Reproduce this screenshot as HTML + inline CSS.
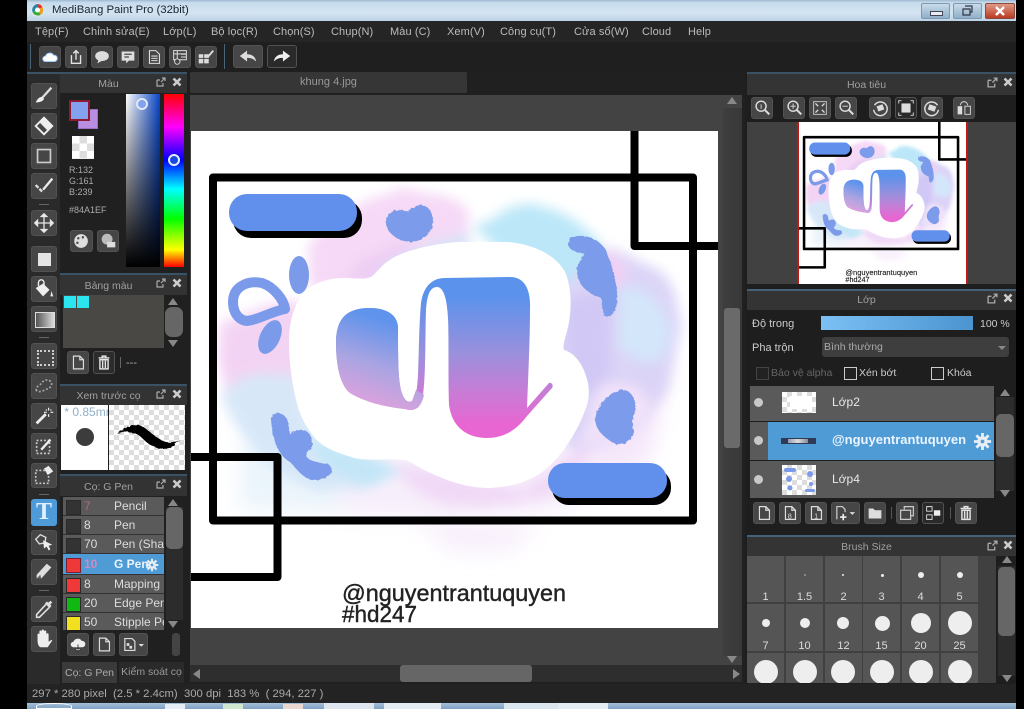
<!DOCTYPE html>
<html><head><meta charset="utf-8"><title>MediBang Paint Pro</title>
<style>
html,body{margin:0;padding:0;background:#000}
#p{position:relative;width:1024px;height:709px;overflow:hidden;background:#000;font-family:"Liberation Sans","DejaVu Sans",sans-serif;font-size:12px;color:#bbb}
#p div,#p svg,#p span.t{position:absolute}
.t{white-space:nowrap;line-height:14px}
.mn{font-size:11px;letter-spacing:.1px}
.b{background:#464646;border:1px solid #525252;border-radius:3px;box-sizing:border-box}
.b svg{left:0;top:0;width:100%;height:100%}
.h{background:#333;color:#a0a0a0;text-align:center;line-height:19px;font-size:10.5px;border-top:2px solid #3a5266;box-sizing:border-box}
.hr{padding-right:30px}
.sb{background:#2c2c2c}
.th{background:#666;border-radius:5px}
.rw{background:#5a5a5a;border-bottom:1px solid #333;box-sizing:border-box;left:63px;width:101px;height:19px;color:#ddd}
.sw{left:3px;top:3px;width:13px;height:13px;background:#333;border:1px solid #2a2a2a}
.n{left:21px;top:2px;font-size:12px;line-height:15px}
.m{left:51px;top:2px;font-size:12px;line-height:15px;white-space:nowrap;width:50px;overflow:hidden}
.c{background:#555;width:37px;box-sizing:border-box}
.d{background:#eee;border-radius:50%}
.l{color:#ddd;font-size:11px;text-align:center;line-height:12px;width:37px}
.ck{width:11px;height:11px;border:1px solid #ccc;background:#222}
.up{width:0;height:0;border-left:5px solid transparent;border-right:5px solid transparent;border-bottom:7px solid #888}
.dn{width:0;height:0;border-left:5px solid transparent;border-right:5px solid transparent;border-top:7px solid #888}
.chk{background-color:#fff;background-image:linear-gradient(45deg,#ddd 25%,transparent 25%,transparent 75%,#ddd 75%),linear-gradient(45deg,#ddd 25%,transparent 25%,transparent 75%,#ddd 75%);background-size:10px 10px;background-position:0 0,5px 5px}
</style></head><body><div id="p">

<svg width="0" height="0" style="left:0;top:0"><defs>
<symbol id="pop" viewBox="0 0 10 10"><path d="M1 3h3M1 3v6h6V6M5 5l4-4M6 1h3v3" fill="none" stroke="#aaa" stroke-width="1.2"/></symbol>
<symbol id="xx" viewBox="0 0 10 10"><path d="M1.5 1.5l7 7M8.5 1.5l-7 7" fill="none" stroke="#ccc" stroke-width="2.6"/></symbol>
<symbol id="page" viewBox="0 0 22 22"><path d="M6 4h7l4 4v10H6zM13 4v4h4" fill="none" stroke="#ddd" stroke-width="1.3"/></symbol>
<symbol id="trash" viewBox="0 0 22 22"><path d="M5 6h12M9 6V4h4v2M6.5 8h9v10h-9zM9.5 9v8M12.5 9v8" fill="none" stroke="#e4e4e4" stroke-width="1.6"/></symbol>
<symbol id="gear" viewBox="0 0 20 20"><circle cx="10" cy="10" r="5.5" fill="#e8eef5"/><path d="M10 1v18M1 10h18M3.6 3.6l12.8 12.8M16.4 3.6L3.6 16.4" stroke="#e8eef5" stroke-width="3"/><circle cx="10" cy="10" r="2" fill="#5a9ad0"/></symbol>
<filter id="wc" x="-25%" y="-25%" width="150%" height="150%"><feTurbulence type="fractalNoise" baseFrequency=".06" numOctaves="3" seed="4"/><feDisplacementMap in="SourceGraphic" scale="6"/><feGaussianBlur stdDeviation="6"/></filter>
<filter id="wc2" x="-30%" y="-30%" width="160%" height="160%"><feGaussianBlur stdDeviation="11"/></filter>
<filter id="rg" x="-10%" y="-10%" width="120%" height="120%"><feTurbulence type="fractalNoise" baseFrequency=".3" numOctaves="2" seed="2"/><feDisplacementMap in="SourceGraphic" scale="3"/></filter>
<linearGradient id="lg" gradientUnits="userSpaceOnUse" x1="0" y1="295" x2="0" y2="425"><stop offset="0" stop-color="#5a92ec"/><stop offset=".45" stop-color="#9a90dc"/><stop offset=".75" stop-color="#c87cd6"/><stop offset="1" stop-color="#e866d2"/></linearGradient>
<linearGradient id="lg2" gradientUnits="userSpaceOnUse" x1="378" y1="318" x2="350" y2="405"><stop offset="0" stop-color="#5f93ec"/><stop offset=".5" stop-color="#aaa4e2"/><stop offset="1" stop-color="#e4a2dc"/></linearGradient>
</defs></svg>

<!-- title bar -->
<div style="left:27px;top:0;width:989px;height:21px;background:linear-gradient(#9db8d0 0,#c6dbec 12%,#d5e4f1 60%,#bcd2e6 100%)"></div>
<svg style="left:30px;top:2px" width="15" height="16" viewBox="0 0 15 16"><circle cx="7.5" cy="8" r="6.5" fill="#e8e8e8"/><path d="M7.5 2a6 6 0 0 1 5 3L7.5 8z" fill="#d33"/><path d="M12.5 5a6 6 0 0 1-2 8L7.5 8z" fill="#e8a020"/><path d="M10.5 13a6 6 0 0 1-8-3L7.5 8z" fill="#3a3"/><path d="M2.5 10a6 6 0 0 1 5-8V8z" fill="#28a"/><circle cx="7.5" cy="8" r="2.5" fill="#fff"/></svg>
<span class="t" style="left:52px;top:3px;color:#1a2530;font-size:11.4px">MediBang Paint Pro (32bit)</span>
<div style="left:921px;top:3px;width:29px;height:16px;background:linear-gradient(#c8dbe9,#8fb0c9);border:1px solid #7e99b0;box-sizing:border-box;border-radius:2px"></div>
<div style="left:930px;top:11px;width:11px;height:3px;background:#e6edf3;border:1px solid #445"></div>
<div style="left:953px;top:3px;width:29px;height:16px;background:linear-gradient(#c8dbe9,#8fb0c9);border:1px solid #7e99b0;box-sizing:border-box;border-radius:2px"></div>
<svg style="left:961px;top:5px" width="13" height="12" viewBox="0 0 13 12"><path d="M4 1h7v6H9M2 4h7v6H2z" fill="none" stroke="#334" stroke-width="1.2"/></svg>
<div style="left:985px;top:3px;width:30px;height:16px;background:linear-gradient(#e09a88,#bb3a22);border:1px solid #8a4a3c;box-sizing:border-box;border-radius:2px"></div>
<svg style="left:994px;top:6px" width="12" height="10" viewBox="0 0 12 10"><path d="M2 1l8 8M10 1L2 9" stroke="#fff" stroke-width="2.4"/></svg>

<!-- menu -->
<div style="left:27px;top:21px;width:989px;height:21px;background:#252525"></div>
<span class="t mn" style="left:35px;top:25px">Tệp(F)</span>
<span class="t mn" style="left:83px;top:25px">Chỉnh sửa(E)</span>
<span class="t mn" style="left:163px;top:25px">Lớp(L)</span>
<span class="t mn" style="left:211px;top:25px">Bộ lọc(R)</span>
<span class="t mn" style="left:273px;top:25px">Chọn(S)</span>
<span class="t mn" style="left:331px;top:25px">Chụp(N)</span>
<span class="t mn" style="left:390px;top:25px">Màu (C)</span>
<span class="t mn" style="left:447px;top:25px">Xem(V)</span>
<span class="t mn" style="left:500px;top:25px">Công cụ(T)</span>
<span class="t mn" style="left:574px;top:25px">Cửa sổ(W)</span>
<span class="t mn" style="left:642px;top:25px">Cloud</span>
<span class="t mn" style="left:688px;top:25px">Help</span>

<!-- toolbar -->
<div style="left:27px;top:42px;width:989px;height:30px;background:#1f1f1f"></div>
<div style="left:30px;top:44px;width:1px;height:25px;background:#4a6478"></div>
<div style="left:224px;top:44px;width:1px;height:25px;background:#4a6478"></div>
<div class="b" style="left:39px;top:46px;width:22px;height:22px"><svg viewBox="0 0 22 22"><path d="M6 16a3 3 0 0 1 0-6 5 5 0 0 1 9-1 3.5 3.5 0 0 1 1 7z" fill="#fff" stroke="#8fc4ff" stroke-width="1"/></svg></div>
<div class="b" style="left:65px;top:46px;width:22px;height:22px"><svg viewBox="0 0 22 22"><path d="M6 9v9h10V9M11 14V4M8 7l3-3 3 3" fill="none" stroke="#e4e4e4" stroke-width="1.5"/></svg></div>
<div class="b" style="left:91px;top:46px;width:22px;height:22px"><svg viewBox="0 0 22 22"><ellipse cx="11" cy="10" rx="7.5" ry="5.5" fill="#ddd"/><path d="M7 14l-1 4 5-3z" fill="#ddd"/></svg></div>
<div class="b" style="left:117px;top:46px;width:22px;height:22px"><svg viewBox="0 0 22 22"><path d="M4 5h14v10h-6l-3 3v-3H4z" fill="#ddd"/><path d="M7 8h8M7 11h5" stroke="#444" stroke-width="1.3"/></svg></div>
<div class="b" style="left:143px;top:46px;width:22px;height:22px"><svg viewBox="0 0 22 22"><path d="M6 4h7l4 4v10H6zM8 10h7M8 12.500h7M8 15h7" fill="none" stroke="#ddd" stroke-width="1.2"/></svg></div>
<div class="b" style="left:169px;top:46px;width:22px;height:22px"><svg viewBox="0 0 22 22"><path d="M4 4h14v10H4zM4 7.500h14M8 4v10M12 8h6M12 11h6" fill="none" stroke="#ddd" stroke-width="1.1"/><circle cx="8" cy="16" r="3" fill="#444" stroke="#ddd"/></svg></div>
<div class="b" style="left:195px;top:46px;width:22px;height:22px"><svg viewBox="0 0 22 22"><path d="M3 8h5v4H3zM9 8h5v4H9zM3 13h5v5H3zM9 13h5v5H9z" fill="#ddd"/><path d="M13 11l6-7" stroke="#ddd" stroke-width="2"/></svg></div>
<div class="b" style="left:233px;top:45px;width:30px;height:23px"><svg viewBox="0 0 30 23"><path d="M6 11l8-6v4c6 0 9 3 10 8-3-3-6-4-10-4v4z" fill="#ddd"/></svg></div>
<div class="b" style="left:267px;top:45px;width:30px;height:23px;background:#2a2a2a"><svg viewBox="0 0 30 23"><path d="M24 11l-8-6v4c-6 0-9 3-10 8 3-3 6-4 10-4v4z" fill="#eee"/></svg></div>

<!-- left tool col -->
<div style="left:27px;top:72px;width:33px;height:612px;background:#2a2a2a;border-top:2px solid #3a5266;box-sizing:border-box"></div>
<div class="b" style="left:31px;top:83px;width:26px;height:26px"><svg viewBox="0 0 26 26"><path d="M21 4L11 15" stroke="#ddd" stroke-width="2.500"/><path d="M11 14c-3 0-5 2-7 6 4 0 8-1 9-4z" fill="#eee"/></svg></div>
<div class="b" style="left:31px;top:113px;width:26px;height:26px"><svg viewBox="0 0 26 26"><path d="M13 4l9 9-9 9-9-9z" fill="none" stroke="#eee" stroke-width="2"/><path d="M8 9l5-5 9 9-5 5z" fill="#eee"/></svg></div>
<div class="b" style="left:31px;top:143px;width:26px;height:26px"><svg viewBox="0 0 26 26"><rect x="6" y="6" width="14" height="14" fill="none" stroke="#ccc" stroke-width="1.800"/></svg></div>
<div class="b" style="left:31px;top:173px;width:26px;height:26px"><svg viewBox="0 0 26 26"><path d="M22 5L12 17" stroke="#eee" stroke-width="2.500"/><path d="M4 12l3 3M8 16l3 3" stroke="#ddd" stroke-width="2.500"/></svg></div>
<div style="left:39px;top:204px;width:10px;height:1px;background:#666"></div>
<div class="b" style="left:31px;top:210px;width:26px;height:26px"><svg viewBox="0 0 26 26"><path d="M13 4v18M4 13h18M13 3l-3 3h6zM13 23l-3-3h6zM3 13l3-3v6zM23 13l-3-3v6z" fill="#e8e8e8" stroke="#e8e8e8" stroke-width="1.400"/></svg></div>
<div class="b" style="left:31px;top:246px;width:26px;height:26px"><div style="left:6px;top:6px;width:13px;height:13px;background:#e4e4e4"></div></div>
<div class="b" style="left:31px;top:276px;width:26px;height:26px"><svg viewBox="0 0 26 26"><path d="M4 12l8-5 7 7-7 7z" fill="#eee"/><path d="M7 10V6a3 3 0 0 1 6 0v4" fill="none" stroke="#eee" stroke-width="1.500"/><path d="M21 15l2 6h-3z" fill="#eee"/></svg></div>
<div class="b" style="left:31px;top:306px;width:26px;height:26px"><div style="left:3px;top:5px;width:18px;height:14px;background:linear-gradient(90deg,#555,#ddd);border:1px solid #ddd"></div></div>
<div style="left:39px;top:337px;width:10px;height:1px;background:#666"></div>
<div class="b" style="left:31px;top:343px;width:26px;height:26px"><div style="left:5px;top:6px;width:13px;height:12px;border:2px dotted #ccc"></div></div>
<div class="b" style="left:31px;top:373px;width:26px;height:26px"><svg viewBox="0 0 26 26"><path d="M5 18c-2-4 3-5 5-8s7-5 10-2 0 7-3 8-9 5-12 2z" fill="none" stroke="#aaa" stroke-width="1.800" stroke-dasharray="2 2"/></svg></div>
<div class="b" style="left:31px;top:403px;width:26px;height:26px"><svg viewBox="0 0 26 26"><path d="M5 21L15 11" stroke="#eee" stroke-width="3"/><path d="M18 4v3M18 11v3M13 9h3M20 9h3M15 6l1 1M21 6l-1 1" stroke="#eee" stroke-width="1.300"/></svg></div>
<div class="b" style="left:31px;top:433px;width:26px;height:26px"><svg viewBox="0 0 26 26"><rect x="5" y="7" width="14" height="14" fill="none" stroke="#ccc" stroke-width="1.800" stroke-dasharray="2 2"/><path d="M10 17l10-11" stroke="#eee" stroke-width="2.500"/></svg></div>
<div class="b" style="left:31px;top:463px;width:26px;height:25px"><svg viewBox="0 0 26 25"><rect x="4" y="7" width="14" height="14" fill="none" stroke="#ccc" stroke-width="1.800" stroke-dasharray="2 2"/><path d="M13 5l5-3 5 6-6 4z" fill="#eee"/></svg></div>
<div style="left:39px;top:494px;width:10px;height:1px;background:#666"></div>
<div style="left:31px;top:499px;width:26px;height:27px;background:#4f9bd8;border-radius:3px;color:#dff0ff;font:bold 24px/27px 'Liberation Serif',serif;text-align:center">T</div>
<div class="b" style="left:31px;top:530px;width:26px;height:25px"><svg viewBox="0 0 26 25"><path d="M4 9l5-5 6 3-1 6-6 1z" fill="none" stroke="#ddd" stroke-width="1.500"/><path d="M12 10l10 5-4 1 2 4-2 1-2-4-3 2z" fill="#eee"/></svg></div>
<div class="b" style="left:31px;top:559px;width:26px;height:26px"><svg viewBox="0 0 26 26"><path d="M16 4l5 4-11 12H5v-4z" fill="#ddd"/><path d="M5 20l5 0-1-4z" fill="#666"/></svg></div>
<div style="left:39px;top:590px;width:10px;height:1px;background:#666"></div>
<div class="b" style="left:31px;top:596px;width:26px;height:26px"><svg viewBox="0 0 26 26"><path d="M15 8L5 19v3h3L19 11" fill="none" stroke="#ddd" stroke-width="1.800"/><path d="M14 7l2-2 2 1 2-2 2 2-2 2 1 2-2 2z" fill="#ddd"/></svg></div>
<div class="b" style="left:31px;top:626px;width:26px;height:26px"><svg viewBox="0 0 26 26"><path d="M6 13V8a1 1 0 0 1 2 0V5a1 1 0 0 1 2.500 0V4a1 1 0 0 1 2.500 0v1a1 1 0 0 1 2.500 0v3a1 1 0 0 1 2.500 0v8l3-2c1 0 1 1 0 2l-4 6H9c-3-2-3-6-3-9z" fill="#eee"/></svg></div>

<!-- left panels background -->
<div style="left:60px;top:72px;width:130px;height:612px;background:#202020"></div>
<div class="h" style="left:60px;top:72px;width:127px;height:21px;line-height:21px"><span style="position:relative;left:-15px">Màu</span></div>
<svg style="left:156px;top:77px" width="10" height="10"><use href="#pop"/></svg><svg style="left:172px;top:77px" width="10" height="10"><use href="#xx"/></svg>
<div style="left:78px;top:109px;width:20px;height:20px;background:#b98ee0;border:1px solid #9a70c4;box-sizing:border-box"></div>
<div style="left:69px;top:100px;width:21px;height:21px;background:#84a1ef;border:2px solid #8d1a30;box-sizing:border-box"></div>
<div class="chk" style="left:72px;top:136px;width:22px;height:23px;background-size:15px 15px;background-position:0 0,7.500px 7.500px"></div>
<span class="t" style="left:69px;top:165px;font-size:9px;line-height:11px;color:#aaa">R:132</span>
<span class="t" style="left:69px;top:176px;font-size:9px;line-height:11px;color:#aaa">G:161</span>
<span class="t" style="left:69px;top:187px;font-size:9px;line-height:11px;color:#aaa">B:239</span>
<span class="t" style="left:69px;top:205px;font-size:9px;line-height:11px;color:#aaa">#84A1EF</span>
<div class="b" style="left:70px;top:230px;width:23px;height:22px"><svg viewBox="0 0 23 22"><circle cx="11" cy="11" r="7.500" fill="#ddd"/><circle cx="8" cy="8" r="1.300" fill="#444"/><circle cx="13" cy="7" r="1.300" fill="#444"/><circle cx="7" cy="13" r="1.300" fill="#444"/></svg></div>
<div class="b" style="left:97px;top:230px;width:22px;height:22px"><svg viewBox="0 0 22 22"><circle cx="10" cy="9" r="6" fill="#bbb"/><rect x="10" y="12" width="9" height="6" fill="#ddd"/></svg></div>
<div style="left:126px;top:94px;width:34px;height:173px;background:linear-gradient(#0000 0,#000 100%),linear-gradient(90deg,#fff,#0a46c8)"></div>
<div style="left:136px;top:98px;width:8px;height:8px;border:2px solid #dfe8f5;border-radius:50%;background:#84a1ef"></div>
<div style="left:164px;top:94px;width:20px;height:173px;background:linear-gradient(#f00 0,#f0f 19%,#00f 38%,#0ff 55%,#0f0 72%,#ff0 90%,#f00 100%)"></div>
<div style="left:168px;top:154px;width:8px;height:8px;border:2px solid #e4effa;border-radius:50%;background:#1a48e0"></div>

<!-- palette panel -->
<div class="h" style="left:60px;top:273px;width:127px;height:22px;line-height:22px"><span style="position:relative;left:-15px">Bảng màu</span></div>
<svg style="left:156px;top:278px" width="10" height="10"><use href="#pop"/></svg><svg style="left:172px;top:278px" width="10" height="10"><use href="#xx"/></svg>
<div style="left:63px;top:295px;width:101px;height:53px;background:#4a4845"></div>
<div style="left:64px;top:296px;width:12px;height:12px;background:#2be6f0"></div>
<div style="left:77px;top:296px;width:12px;height:12px;background:#2be6f0"></div>
<div class="up" style="left:168px;top:298px"></div>
<div class="th" style="left:165px;top:307px;width:18px;height:30px;border-radius:7px"></div>
<div class="dn" style="left:168px;top:340px"></div>
<div class="b" style="left:67px;top:351px;width:22px;height:23px"><svg viewBox="0 0 22 22"><use href="#page"/></svg></div>
<div class="b" style="left:93px;top:351px;width:22px;height:23px;background:#2c2c2c"><svg viewBox="0 0 22 22"><use href="#trash"/></svg></div>
<div style="left:120px;top:357px;width:1px;height:11px;background:#666"></div>
<span class="t" style="left:126px;top:356px;font-size:11px;color:#aaa">---</span>

<!-- brush preview -->
<div class="h" style="left:60px;top:384px;width:127px;height:21px;line-height:21px"><span style="position:relative;left:-15px">Xem trước cọ</span></div>
<svg style="left:156px;top:389px" width="10" height="10"><use href="#pop"/></svg><svg style="left:172px;top:389px" width="10" height="10"><use href="#xx"/></svg>
<div style="left:61px;top:405px;width:47px;height:65px;background:#fff;overflow:hidden;color:#8fb0c8;font-size:12px;line-height:14px;white-space:nowrap">&nbsp;* 0.85mm</div>
<div style="left:76px;top:428px;width:18px;height:18px;border-radius:50%;background:#3c3c3c"></div>
<div class="chk" style="left:109px;top:405px;width:76px;height:65px"></div>
<svg style="left:109px;top:405px" width="76" height="65" viewBox="0 0 76 65"><path d="M8 29c8-7 14-9 22-9 7 2 12 9 19 13 7 5 12 7 22 2-6 5-10 9-16 9-10 0-17-6-23-12-6-5-12-7-24-3z" fill="#000" filter="url(#rg)"/></svg>

<!-- brush list -->
<div class="h" style="left:60px;top:474px;width:127px;height:22px;line-height:22px"><span style="position:relative;left:-15px">Cọ: G Pen</span></div>
<svg style="left:156px;top:479px" width="10" height="10"><use href="#pop"/></svg><svg style="left:172px;top:479px" width="10" height="10"><use href="#xx"/></svg>
<div class="rw" style="top:497px"><div class="sw"></div><div class="n" style="color:#b06a70">7</div><div class="m">Pencil</div></div>
<div class="rw" style="top:516px"><div class="sw"></div><div class="n">8</div><div class="m">Pen</div></div>
<div class="rw" style="top:535px"><div class="sw"></div><div class="n">70</div><div class="m">Pen (Shading)</div></div>
<div class="rw" style="top:554px;height:21px;background:#4f9bd5;color:#eaf5ff"><div class="sw" style="background:#f03838;border-color:#7a2030;top:4px"></div><div class="n" style="color:#d08ac0;font-weight:bold;top:3px">10</div><div class="m" style="font-weight:bold;top:3px">G Pen</div><svg style="left:82px;top:4px;width:14px;height:14px" viewBox="0 0 20 20"><use href="#gear"/></svg></div>
<div class="rw" style="top:575px"><div class="sw" style="background:#f03838"></div><div class="n">8</div><div class="m">Mapping Pen</div></div>
<div class="rw" style="top:594px"><div class="sw" style="background:#12b812"></div><div class="n">20</div><div class="m">Edge Pen</div></div>
<div class="rw" style="top:613px;height:17px;border:0;overflow:hidden"><div class="sw" style="background:#f0e020"></div><div class="n">50</div><div class="m">Stipple Pen</div></div>
<div class="up" style="left:168px;top:499px"></div>
<div class="sb" style="left:166px;top:507px;width:17px;height:113px"></div>
<div class="th" style="left:166px;top:507px;width:17px;height:42px"></div>
<div class="dn" style="left:168px;top:621px"></div>
<div class="b" style="left:67px;top:633px;width:22px;height:23px"><svg viewBox="0 0 22 22"><path d="M6 14a3 3 0 0 1 0-6 5 5 0 0 1 9-1 3.500 3.500 0 0 1 1 7z" fill="#eee"/><path d="M11 11v8M8 16l3 3 3-3" stroke="#333" fill="#eee" stroke-width="1"/></svg></div>
<div class="b" style="left:93px;top:633px;width:22px;height:23px"><svg viewBox="0 0 22 22"><use href="#page"/></svg></div>
<div class="b" style="left:119px;top:633px;width:29px;height:23px"><svg viewBox="0 0 29 23"><path d="M5 5h8l3 3v10H5z" fill="none" stroke="#ddd" stroke-width="1.300"/><rect x="7" y="10" width="3" height="3" fill="#ddd"/><rect x="10" y="13" width="3" height="3" fill="#ddd"/><path d="M20 11h6l-3 3z" fill="#ddd"/></svg></div>
<div style="left:172px;top:633px;width:8px;height:23px;background:#444;border-radius:3px"></div>
<div style="left:62px;top:662px;width:55px;height:21px;background:#3a3a3a;color:#aaa;font-size:10.5px;line-height:22px;text-align:center">Cọ: G Pen</div>
<div style="left:119px;top:662px;width:65px;height:21px;background:#2a2a2a;color:#999;font-size:10.5px;line-height:20px;text-align:center;overflow:hidden;white-space:nowrap">Kiểm soát cọ</div>

<!-- canvas area -->
<div style="left:187px;top:72px;width:558px;height:612px;background:#202020"></div>
<div style="left:190px;top:72px;width:277px;height:21px;background:#363636;border-radius:2px;color:#999;line-height:20px;text-align:center;font-size:11px">khung 4.jpg</div>
<div style="left:190px;top:95px;width:552px;height:570px;background:#434343"></div>
<svg id="cv" style="left:191px;top:131px" width="527" height="497" viewBox="191 131 527 497">
<g id="art">
<rect x="150" y="100" width="600" height="560" fill="#fff"/>
<!-- soft outer fades -->
<g filter="url(#wc2)">
<path d="M240 440L420 450 600 430 660 380 640 470 560 510 430 520 280 510Z" fill="#f7eefb"/>
<path d="M240 440L340 460 340 510 240 510Z" fill="#eaf4fb"/>
<path d="M420 525L540 525 510 552 450 552Z" fill="#f8eefb"/>
<path d="M590 400L670 360 650 460 590 470Z" fill="#f5e6fa"/>
</g>
<g filter="url(#wc)" opacity=".92">
<path d="M308 243C340 210 375 195 404 189 430 192 460 198 468 210L470 250 400 290 310 290Z" fill="#f5d6f6"/>
<path d="M345 285C360 258 385 245 415 240L410 280Z" fill="#eccaf4"/>
<path d="M378 275C395 255 430 240 470 232L470 260 385 290Z" fill="#d4e2f6"/>
<path d="M474 227C500 215 515 204 531 204 545 208 560 210 570 218 590 230 605 245 608 262L590 320 520 270Z" fill="#b6e5f8"/>
<path d="M609 248C625 250 640 262 655 268 672 275 680 300 680 335 675 365 668 390 655 410 640 430 610 450 570 450L540 400 545 300Z" fill="#d9d2f7"/>
<path d="M560 300L610 290 612 390 570 395Z" fill="#cfc4f5"/>
<path d="M620 290C640 280 668 300 672 340 660 370 635 365 618 345Z" fill="#d0e4fa"/>
<path d="M598 250C610 248 630 262 628 282L605 288Z" fill="#efcdf4"/>
<path d="M600 385C620 380 650 385 650 410 635 430 605 440 580 445Z" fill="#f2e2fa"/>
<path d="M221 325C240 312 275 305 300 300L320 380 300 400 225 392C218 370 217 345 221 325Z" fill="#f3d0f3"/>
<path d="M220 392C240 375 265 370 295 375L320 440 368 470 368 488 320 490C280 480 235 440 220 392Z" fill="#d4e6f8"/>
<path d="M300 430L370 455 400 470 368 488 330 470Z" fill="#bfe6f7"/>
<path d="M395 465L440 470 520 490 590 445 580 480C555 500 500 510 450 505 425 500 405 485 395 465Z" fill="#f0d8f6"/>
</g>
<path d="M289 343C289 325 292 308 304 292 315 282 330 278 345 278 355 278 365 280 371 277 378 272 380 266 390 260 400 252 430 244 458 242L508 242C530 244 552 252 564 270 572 285 572 310 568 327 566 337 562 345 564 350 575 353 584 365 588 383 590 395 588 405 584 413 578 430 560 460 541 473 525 483 510 487 490 488 465 488 445 480 424 470 415 465 410 461 404 460 385 458 365 462 351 457 335 452 322 447 314 437 305 425 300 415 298 407 293 390 289 365 289 343Z" fill="#fff"/>
<!-- logo -->
<path id="lp" d="M370 308C388 308 398 316 398 328 398 350 398 372 400 385 402 398 407 404 412 401 416 398 417 390 418 375 419 350 419 325 421 303 423 288 431 278 445 278L510 277C525 277 531 290 530 310 530 340 528 380 527 408L549 383C551 382 554 385 552 388L527 416C515 432 502 438 487 438 468 438 452 428 449 405 448 380 449 340 448 318 447 300 444 287 437 287 430 287 427 295 426 310 425 340 426 370 423 395 421 408 415 412 405 409 385 407 365 402 350 393 340 385 336 365 336 343 336 320 345 308 370 308Z" fill="url(#lg)"/>
<path d="M370 308C388 308 398 316 398 328 398 350 398 372 400 385 402 398 407 404 412 401L416 390 424 395C421 408 415 412 405 409 385 407 365 402 350 393 340 385 336 365 336 343 336 320 345 308 370 308Z" fill="url(#lg2)"/>
<!-- blobs -->
<g fill="#7b9bea">
<path d="M386 221C389 209 401 208 408 212 414 203 429 202 432 215 436 230 426 240 412 242 398 242 385 232 386 221Z" filter="url(#rg)"/>
<ellipse cx="299" cy="275" rx="10" ry="19"/>
<ellipse cx="270" cy="337" rx="10" ry="18" transform="rotate(25 270 337)"/>
<path d="M569 240C577 232 597 236 606 250 612 265 618 285 617 300 617 312 610 318 604 316L601 298C592 295 578 288 577 272 577 262 582 258 585 254 575 252 566 250 569 240Z" filter="url(#rg)"/>
<path d="M620 390C630 388 638 400 635 412 632 418 632 425 634 432 632 442 620 448 612 442 600 435 593 425 596 415 598 405 610 392 620 390Z" filter="url(#rg)"/>
<path d="M271 418C275 410 285 412 288 422L290 434C298 428 310 428 312 440 313 450 306 452 306 456 312 464 320 462 328 464 336 470 330 478 318 480 305 482 298 470 290 462 278 455 272 440 271 418Z" filter="url(#rg)"/>
</g>
<path d="M233 302C233 287 247 280 262 283 274 287 284 300 285 309 270 312 258 320 247 321 238 320 233 312 233 302Z" fill="none" stroke="#7b9bea" stroke-width="10" stroke-linejoin="round"/>
<!-- pills -->
<rect x="233" y="200" width="129" height="38" rx="18" fill="#000"/>
<rect x="229" y="194" width="128" height="37" rx="18" fill="#6090ec"/>
<rect x="552" y="469" width="119" height="36" rx="17" fill="#000"/>
<rect x="548" y="463" width="119" height="35" rx="17" fill="#6090ec"/>
<!-- frames -->
<g fill="none" stroke="#000" stroke-linejoin="round">
<rect x="213" y="177.500" width="480" height="343" stroke-width="8"/>
<path d="M634.500 120V246H730" stroke-width="8"/>
<path d="M180 457H277.500V577H180" stroke-width="8"/>
</g>
<text x="342" y="601" font-family="Liberation Sans,sans-serif" font-size="23" fill="#222" stroke="#222" stroke-width=".4" textLength="224" lengthAdjust="spacingAndGlyphs">@nguyentrantuquyen</text>
<text x="342" y="622" font-family="Liberation Sans,sans-serif" font-size="23" fill="#222" stroke="#222" stroke-width=".4" textLength="75" lengthAdjust="spacingAndGlyphs">#hd247</text>
</g>
</svg>
<div class="up" style="left:727px;top:97px"></div>
<div style="left:723px;top:108px;width:19px;height:548px;background:linear-gradient(90deg,#3e3e3e,#383838)"></div>
<div class="th" style="left:724px;top:308px;width:16px;height:140px;border-radius:3px;background:#6a6a6a"></div>
<div class="dn" style="left:727px;top:656px"></div>
<div style="left:190px;top:665px;width:552px;height:17px;background:#2e2e2e"></div>
<div style="left:193px;top:669px;width:0;height:0;border-top:5px solid transparent;border-bottom:5px solid transparent;border-right:7px solid #888"></div>
<div style="left:733px;top:669px;width:0;height:0;border-top:5px solid transparent;border-bottom:5px solid transparent;border-left:7px solid #888"></div>
<div style="left:400px;top:665px;width:132px;height:17px;background:#666;border-radius:3px"></div>

<!-- status -->
<div style="left:27px;top:684px;width:989px;height:19px;background:#232323"></div>
<span class="t" style="left:32px;top:687px;color:#aaa;white-space:pre;font-size:11.3px">297 * 280 pixel  (2.5 * 2.4cm)  300 dpi  183 %  ( 294, 227 )</span>
<div style="left:27px;top:703px;width:989px;height:6px;background:linear-gradient(#a5c0d8,#7ea2c4)"></div>
<div style="left:36px;top:703px;width:36px;height:6px;border:1px solid #fff;border-radius:50% 50% 0 0;box-sizing:border-box"></div>
<div style="left:165px;top:704px;width:20px;height:5px;background:#e4ecf4"></div>
<div style="left:223px;top:704px;width:20px;height:5px;background:#cfe6cf"></div>
<div style="left:283px;top:704px;width:20px;height:5px;background:#e8d8d0"></div>
<div style="left:324px;top:703px;width:50px;height:6px;background:#dde6ee"></div>
<div style="left:384px;top:703px;width:57px;height:6px;background:#e4ecf3"></div>
<div style="left:504px;top:703px;width:54px;height:6px;background:#dbe5ee"></div>
<div style="left:558px;top:703px;width:50px;height:6px;background:#e4ecf3"></div>

<!-- right panels -->
<div style="left:745px;top:72px;width:271px;height:612px;background:#1e1e1e"></div>
<div class="h hr" style="left:747px;top:72px;width:269px;height:23px;line-height:22px;background:#343434">Hoa tiêu</div>
<svg style="left:987px;top:77px" width="11" height="11"><use href="#pop"/></svg><svg style="left:1003px;top:77px" width="10" height="10"><use href="#xx"/></svg>
<div class="b" style="left:751px;top:97px;width:22px;height:22px"><svg viewBox="0 0 22 22"><circle cx="10" cy="9" r="5.500" fill="none" stroke="#ddd" stroke-width="1.600"/><path d="M14 13l5 5" stroke="#ddd" stroke-width="2.200"/><path d="M10 7v5" stroke="#ddd"/></svg></div>
<div class="b" style="left:783px;top:97px;width:22px;height:22px"><svg viewBox="0 0 22 22"><circle cx="10" cy="9" r="5.500" fill="none" stroke="#ddd" stroke-width="1.600"/><path d="M14 13l5 5" stroke="#ddd" stroke-width="2.200"/><path d="M7 9h6M10 6v6" stroke="#ddd"/></svg></div>
<div class="b" style="left:809px;top:97px;width:22px;height:22px"><svg viewBox="0 0 22 22"><rect x="4" y="4" width="14" height="14" fill="none" stroke="#ccc"/><path d="M6 6l3 3M16 6l-3 3M6 16l3-3M16 16l-3-3" stroke="#ddd" stroke-width="1.500"/></svg></div>
<div class="b" style="left:835px;top:97px;width:22px;height:22px"><svg viewBox="0 0 22 22"><circle cx="10" cy="9" r="5.500" fill="none" stroke="#ddd" stroke-width="1.600"/><path d="M14 13l5 5" stroke="#ddd" stroke-width="2.200"/><path d="M7 9h6" stroke="#ddd"/></svg></div>
<div class="b" style="left:869px;top:97px;width:22px;height:22px"><svg viewBox="0 0 22 22"><path d="M5 8a7.500 7.500 0 1 1-1 5" fill="none" stroke="#ddd" stroke-width="1.600"/><rect x="8" y="8" width="7" height="6" fill="#ddd" transform="rotate(-20 11 11)"/></svg></div>
<div class="b" style="left:895px;top:97px;width:22px;height:22px;background:#2a2a2a"><svg viewBox="0 0 22 22"><rect x="6" y="6" width="10" height="10" fill="#ddd"/><path d="M3 6V3h3M19 6V3h-3M3 16v3h3M19 16v3h-3" fill="none" stroke="#ddd"/></svg></div>
<div class="b" style="left:921px;top:97px;width:22px;height:22px"><svg viewBox="0 0 22 22"><path d="M17 8a7.500 7.500 0 1 0 1 5" fill="none" stroke="#ddd" stroke-width="1.600"/><rect x="7" y="8" width="8" height="6" fill="#ddd" transform="rotate(20 11 11)"/></svg></div>
<div class="b" style="left:953px;top:97px;width:22px;height:22px"><svg viewBox="0 0 22 22"><rect x="4" y="9" width="5" height="9" fill="#ddd"/><rect x="12" y="9" width="6" height="9" fill="none" stroke="#ddd"/><path d="M7 8a4 4 0 0 1 8 0" fill="none" stroke="#ddd"/></svg></div>
<div style="left:747px;top:122px;width:269px;height:162px;background:#414141"></div>
<svg style="left:797px;top:122px" width="171" height="162" viewBox="191 131 533 497" preserveAspectRatio="none"><use href="#art"/></svg>
<div style="left:797px;top:122px;width:2px;height:162px;background:#c01818"></div>
<div style="left:966px;top:122px;width:2px;height:162px;background:#c01818"></div>

<!-- layer panel -->
<div class="h hr" style="left:747px;top:289px;width:269px;height:21px;line-height:19px;background:#343434;border-top-color:#43627a">Lớp</div>
<svg style="left:987px;top:293px" width="11" height="11"><use href="#pop"/></svg><svg style="left:1003px;top:293px" width="10" height="10"><use href="#xx"/></svg>
<span class="t" style="left:752px;top:317px;font-size:11px;color:#ccc">Độ trong</span>
<div style="left:821px;top:316px;width:152px;height:14px;background:linear-gradient(90deg,#7cc0f4,#4a94d0)"></div>
<span class="t" style="left:980px;top:317px;font-size:10.5px;color:#ccc">100 %</span>
<span class="t" style="left:752px;top:341px;font-size:11px;color:#ccc">Pha trộn</span>
<div style="left:822px;top:337px;width:187px;height:20px;background:#3e3e3e;border-radius:3px;color:#aaa;font-size:10.5px;line-height:21px;text-indent:2px">Bình thường</div>
<div style="left:998px;top:346px;width:0;height:0;border-left:4px solid transparent;border-right:4px solid transparent;border-top:4px solid #888"></div>
<div class="ck" style="left:756px;top:367px;border-color:#444"></div>
<span class="t" style="left:771px;top:366px;font-size:10.5px;color:#666">Bảo vệ alpha</span>
<div class="ck" style="left:844px;top:367px"></div>
<span class="t" style="left:859px;top:366px;font-size:10.5px;color:#ccc">Xén bớt</span>
<div class="ck" style="left:931px;top:367px"></div>
<span class="t" style="left:947px;top:366px;font-size:10.5px;color:#ccc">Khóa</span>
<div style="left:750px;top:386px;width:244px;height:35px;background:#5a5a5a"></div>
<div style="left:750px;top:422px;width:18px;height:38px;background:#5a5a5a"></div>
<div style="left:768px;top:422px;width:226px;height:38px;background:#4f9bd5"></div>
<div style="left:750px;top:461px;width:244px;height:37px;background:#5a5a5a"></div>
<div style="left:754px;top:398px;width:9px;height:9px;border-radius:50%;background:#c8c8c8"></div>
<div style="left:754px;top:436px;width:9px;height:9px;border-radius:50%;background:#c8c8c8"></div>
<div style="left:754px;top:475px;width:9px;height:9px;border-radius:50%;background:#c8c8c8"></div>
<div class="chk" style="left:782px;top:392px;width:34px;height:21px"></div>
<div style="left:790px;top:396px;width:22px;height:13px;background:#fff"></div>
<div style="left:781px;top:438px;width:35px;height:6px;background:#2e3b55"></div>
<div style="left:788px;top:439px;width:20px;height:4px;background:linear-gradient(90deg,#99b,#ddd,#889)"></div>
<div class="chk" style="left:782px;top:465px;width:34px;height:30px"></div>
<svg style="left:782px;top:465px" width="34" height="30" viewBox="0 0 34 30"><g fill="#7b9bea"><rect x="2" y="3" width="12" height="4" rx="2"/><rect x="23" y="24" width="10" height="3" rx="1.500"/><circle cx="7" cy="14" r="3"/><circle cx="28" cy="9" r="3"/><circle cx="8" cy="23" r="2.500"/><circle cx="29" cy="19" r="2"/></g></svg>
<span class="t" style="left:832px;top:395px;font-size:12px;color:#e8e8e8">Lớp2</span>
<span class="t" style="left:832px;top:433px;font-size:13px;color:#eaf5ff;font-weight:bold">@nguyentrantuquyen</span>
<svg style="left:973px;top:432px" width="19" height="19" viewBox="0 0 20 20"><use href="#gear"/></svg>
<span class="t" style="left:832px;top:472px;font-size:12px;color:#e8e8e8">Lớp4</span>
<div class="up" style="left:1000px;top:389px"></div>
<div class="sb" style="left:996px;top:397px;width:18px;height:94px"></div>
<div class="th" style="left:996px;top:414px;width:18px;height:43px"></div>
<div class="dn" style="left:1000px;top:490px"></div>
<div class="b" style="left:753px;top:502px;width:22px;height:22px"><svg viewBox="0 0 22 22"><use href="#page"/></svg></div>
<div class="b" style="left:779px;top:502px;width:22px;height:22px"><svg viewBox="0 0 22 22"><use href="#page"/><text x="8.500" y="17" font-size="8" fill="#ddd" font-family="Liberation Sans,sans-serif">8</text></svg></div>
<div class="b" style="left:805px;top:502px;width:22px;height:22px"><svg viewBox="0 0 22 22"><use href="#page"/><text x="9" y="17" font-size="8" fill="#ddd" font-family="Liberation Sans,sans-serif">1</text></svg></div>
<div class="b" style="left:831px;top:502px;width:29px;height:22px"><svg viewBox="0 0 29 22"><path d="M5 18V4h6l3 3v3" fill="none" stroke="#ddd" stroke-width="1.200"/><path d="M12 12v7M8.500 15.500h7" stroke="#eee" stroke-width="1.800"/><path d="M19 10h6l-3 3z" fill="#ddd"/></svg></div>
<div class="b" style="left:864px;top:502px;width:22px;height:22px"><svg viewBox="0 0 22 22"><path d="M4 6h5l2 2h7v9H4z" fill="#ddd"/></svg></div>
<div style="left:891px;top:507px;width:1px;height:12px;background:#555"></div>
<div class="b" style="left:896px;top:502px;width:22px;height:22px"><svg viewBox="0 0 22 22"><path d="M8 7V4h10v10h-3M4 8h11v10H4z" fill="none" stroke="#ccc" stroke-width="1.300"/></svg></div>
<div class="b" style="left:922px;top:502px;width:22px;height:22px;background:#2a2a2a"><svg viewBox="0 0 22 22"><path d="M4 4h6v5H4zM4 13h6v5H4z" fill="none" stroke="#ddd"/><rect x="12" y="8" width="7" height="6" fill="#eee"/></svg></div>
<div style="left:950px;top:507px;width:1px;height:12px;background:#555"></div>
<div class="b" style="left:955px;top:502px;width:22px;height:22px"><svg viewBox="0 0 22 22"><use href="#trash"/></svg></div>

<!-- brush size -->
<div class="h hr" style="left:747px;top:535px;width:269px;height:21px;line-height:21px;background:#343434;border-top-color:#43627a">Brush Size</div>
<svg style="left:987px;top:540px" width="11" height="11"><use href="#pop"/></svg><svg style="left:1003px;top:540px" width="10" height="10"><use href="#xx"/></svg>
<div style="left:747px;top:556px;width:249px;height:127px;background:#404040"></div>
<div class="c" style="left:747px;top:556px;height:46px"></div><div class="c" style="left:786px;top:556px;height:46px"></div><div class="c" style="left:825px;top:556px;height:46px"></div><div class="c" style="left:863px;top:556px;height:46px"></div><div class="c" style="left:902px;top:556px;height:46px"></div><div class="c" style="left:941px;top:556px;height:46px"></div>
<div class="c" style="left:747px;top:604px;height:47px"></div><div class="c" style="left:786px;top:604px;height:47px"></div><div class="c" style="left:825px;top:604px;height:47px"></div><div class="c" style="left:863px;top:604px;height:47px"></div><div class="c" style="left:902px;top:604px;height:47px"></div><div class="c" style="left:941px;top:604px;height:47px"></div>
<div class="c" style="left:747px;top:653px;height:30px"></div><div class="c" style="left:786px;top:653px;height:30px"></div><div class="c" style="left:825px;top:653px;height:30px"></div><div class="c" style="left:863px;top:653px;height:30px"></div><div class="c" style="left:902px;top:653px;height:30px"></div><div class="c" style="left:941px;top:653px;height:30px"></div>
<div class="d" style="left:804px;top:574px;width:2px;height:2px;opacity:.45"></div>
<div class="d" style="left:842px;top:574px;width:2px;height:2px"></div>
<div class="d" style="left:881px;top:574px;width:3px;height:3px"></div>
<div class="d" style="left:918px;top:572px;width:6px;height:6px"></div>
<div class="d" style="left:957px;top:572px;width:6px;height:6px"></div>
<div class="d" style="left:762px;top:619px;width:8px;height:8px"></div>
<div class="d" style="left:800px;top:618px;width:10px;height:10px"></div>
<div class="d" style="left:837px;top:617px;width:12px;height:12px"></div>
<div class="d" style="left:875px;top:616px;width:15px;height:15px"></div>
<div class="d" style="left:911px;top:613px;width:20px;height:20px"></div>
<div class="d" style="left:948px;top:611px;width:24px;height:24px"></div>
<div class="d" style="left:754px;top:660px;width:24px;height:24px"></div>
<div class="d" style="left:793px;top:660px;width:24px;height:24px"></div>
<div class="d" style="left:831px;top:660px;width:24px;height:24px"></div>
<div class="d" style="left:870px;top:660px;width:24px;height:24px"></div>
<div class="d" style="left:909px;top:660px;width:24px;height:24px"></div>
<div class="d" style="left:948px;top:660px;width:24px;height:24px"></div>
<div style="left:747px;top:683px;width:269px;height:1px;background:#1e1e1e"></div>
<div class="l" style="left:747px;top:591px">1</div><div class="l" style="left:786px;top:591px">1.5</div><div class="l" style="left:825px;top:591px">2</div><div class="l" style="left:863px;top:591px">3</div><div class="l" style="left:902px;top:591px">4</div><div class="l" style="left:941px;top:591px">5</div>
<div class="l" style="left:747px;top:640px">7</div><div class="l" style="left:786px;top:640px">10</div><div class="l" style="left:825px;top:640px">12</div><div class="l" style="left:863px;top:640px">15</div><div class="l" style="left:902px;top:640px">20</div><div class="l" style="left:941px;top:640px">25</div>
<div class="up" style="left:1002px;top:556px"></div>
<div class="sb" style="left:998px;top:566px;width:17px;height:110px"></div>
<div class="th" style="left:998px;top:567px;width:17px;height:69px"></div>
<div class="dn" style="left:1002px;top:675px"></div>
</div></body></html>
